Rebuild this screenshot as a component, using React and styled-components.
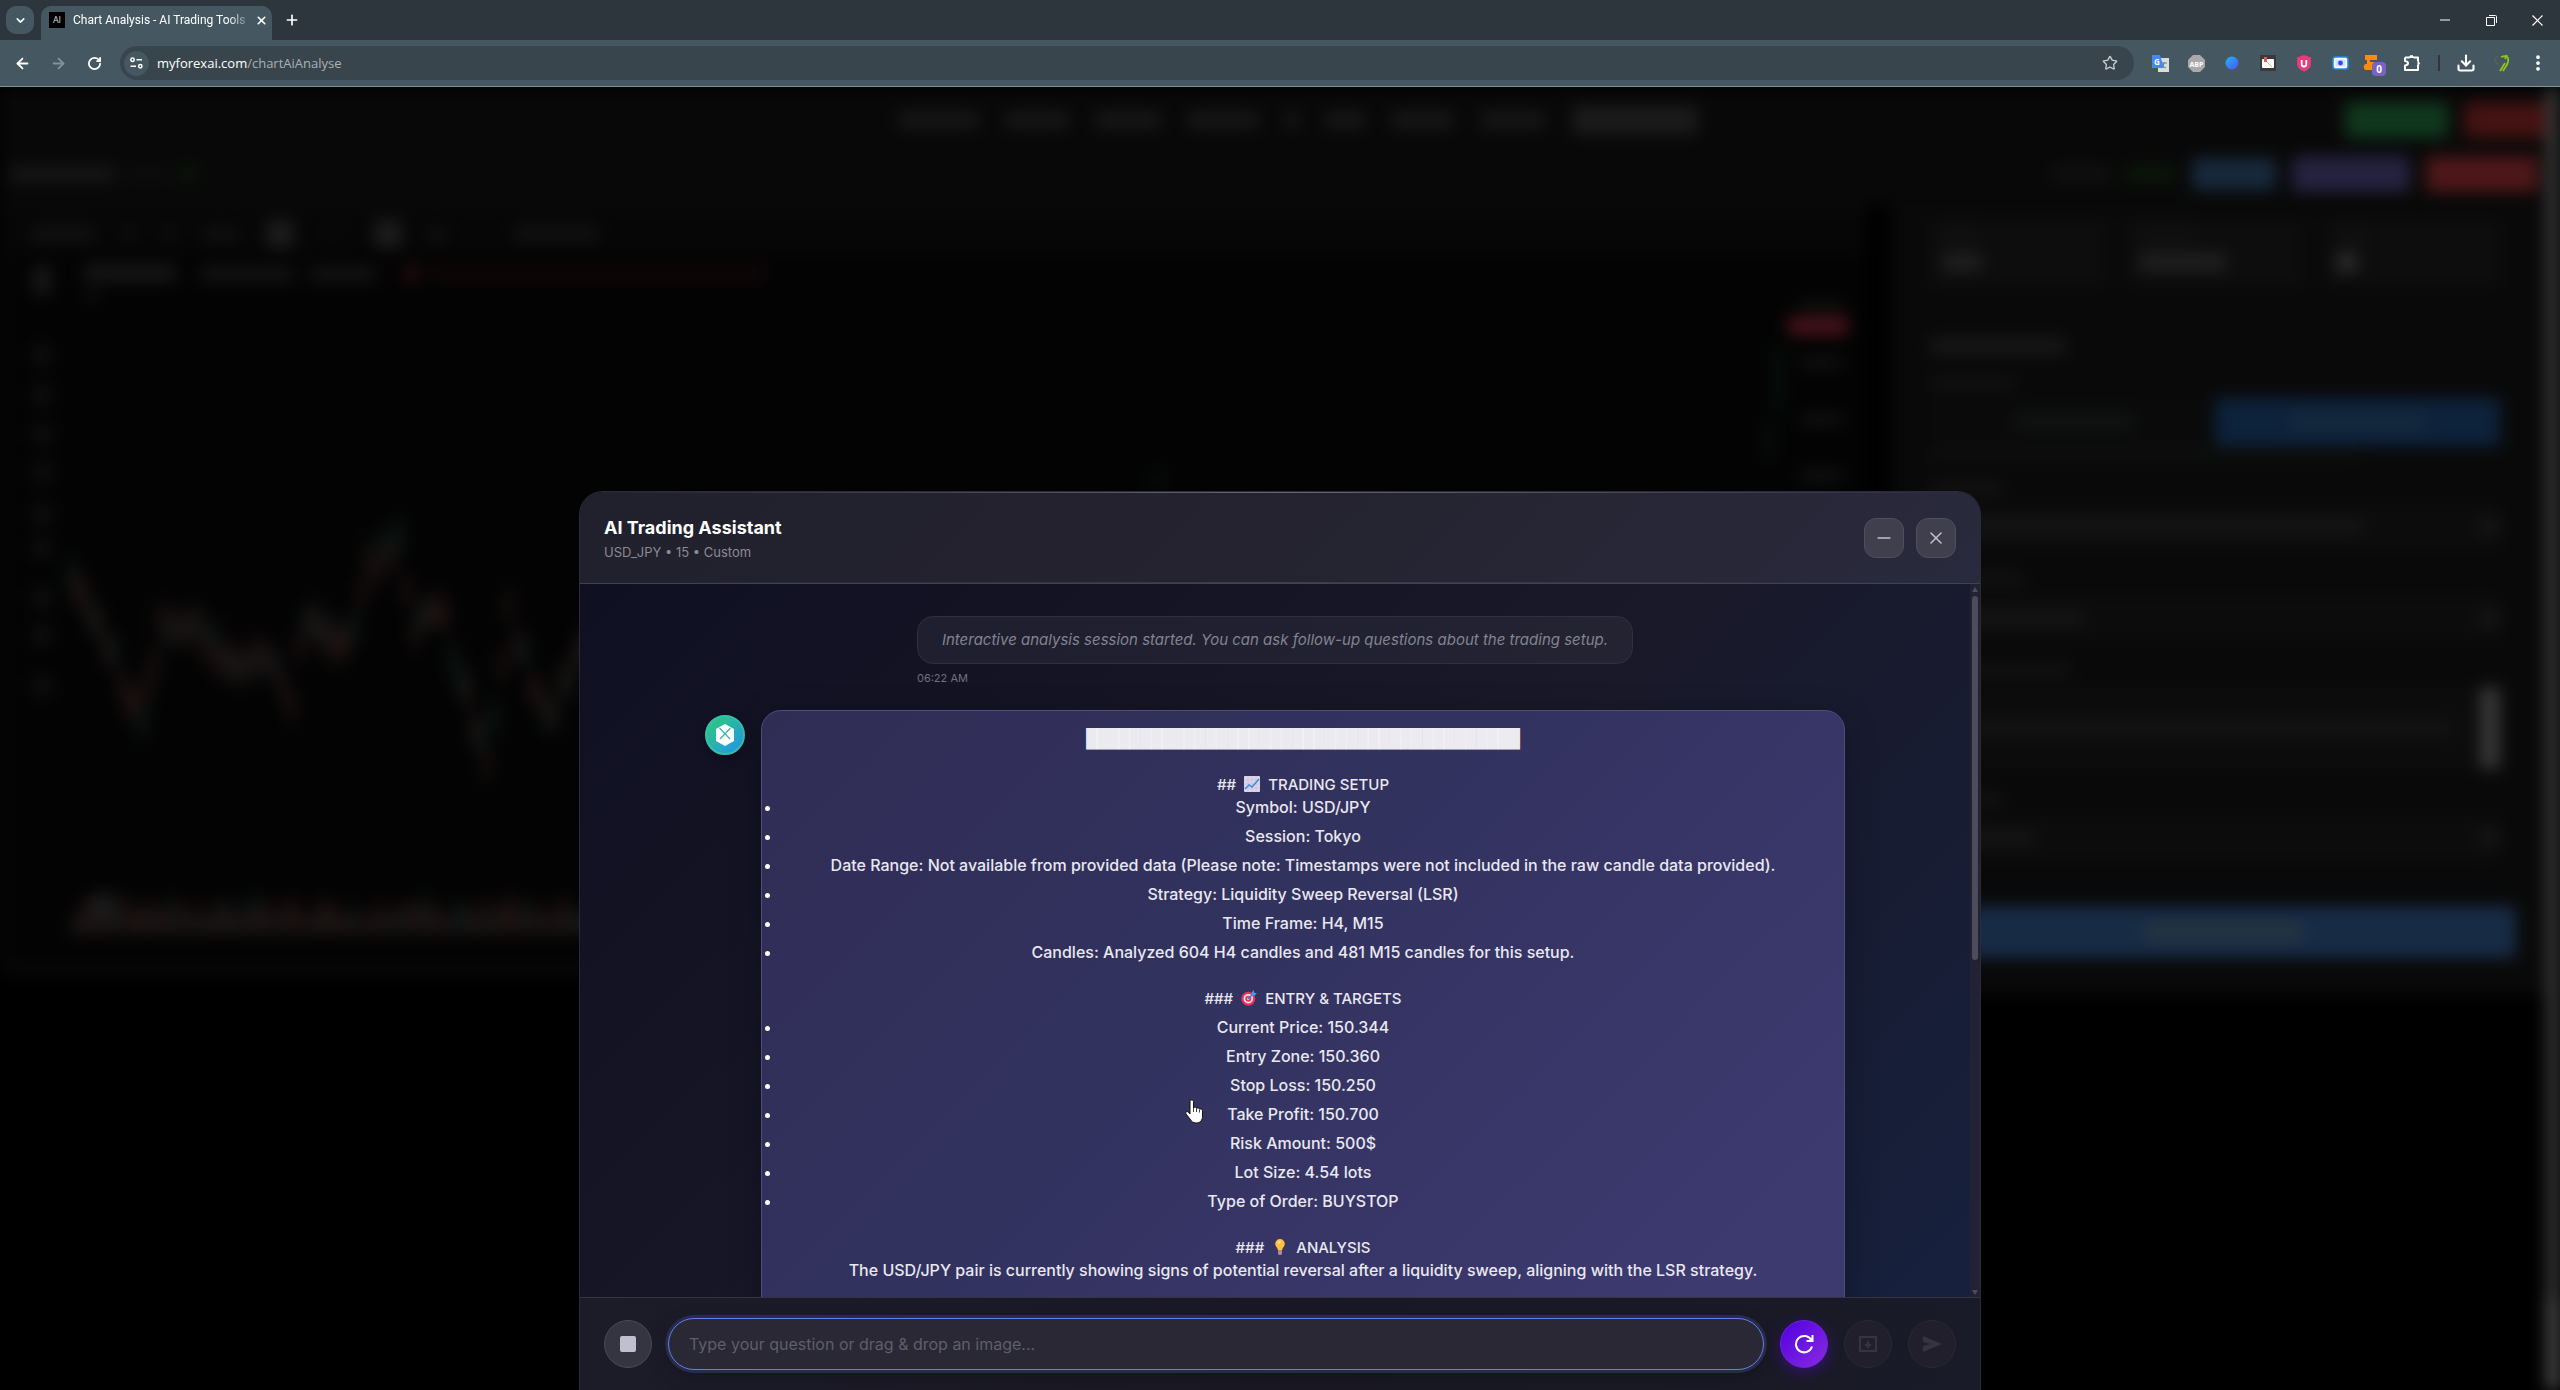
import React from "react";
import styled, { createGlobalStyle } from "styled-components";
import {
  ArrowLeft, ArrowRight, RotateCw, Star, ChevronDown, X, Plus, Minus, Puzzle, Download, EllipsisVertical,
} from "lucide-react";

const Global = createGlobalStyle`
  * { box-sizing: border-box; }
  html, body { margin: 0; background: #000; }
  body { font-family: Inter, "Open Sans", sans-serif; }
  button { font: inherit; padding: 0; border: 0; background: none; color: inherit; }
`;

const Window = styled.div`
  height: 100vh;
  display: flex;
  flex-direction: column;
  overflow: hidden;
  background: #000;
`;

/* ---------- browser chrome ---------- */

const TabStrip = styled.header`
  height: 40px;
  flex: none;
  display: flex;
  align-items: center;
  padding-left: 6px;
  background: #2c363c;
  color: #fff;
`;

const TabSearch = styled.button`
  width: 28px;
  height: 28px;
  border-radius: 10px;
  background: #455760;
  display: grid;
  place-items: center;
`;

const Tab = styled.div`
  align-self: flex-end;
  width: 231px;
  height: 34px;
  margin-left: 7px;
  padding: 0 8px 6px;
  border-radius: 10px 10px 0 0;
  background: #455760;
  display: flex;
  align-items: center;
  gap: 8px;
`;

const Favicon = styled.span`
  flex: none;
  width: 16px;
  height: 16px;
  background: #000;
  color: #ddd;
  font: 9px/16px "Open Sans", sans-serif;
  text-align: center;
`;

const TabTitle = styled.span`
  flex: 1;
  white-space: nowrap;
  font: 12px/20px Roboto, sans-serif;
  mask-image: linear-gradient(90deg, #000 90%, rgba(0, 0, 0, 0.3));
`;

const PlainButton = styled.button`
  flex: none;
  width: ${(p) => p.$w || 36}px;
  height: 28px;
  display: grid;
  place-items: center;
  color: ${(p) => p.$color || "#fff"};
`;

const WindowControls = styled.div`
  display: flex;
  margin-left: auto;
`;

const Toolbar = styled.div`
  height: 47px;
  flex: none;
  display: flex;
  align-items: center;
  padding: 0 4px;
  background: #455760;
  border-bottom: 1px solid #84939b;
`;

const UrlBar = styled.div`
  flex: 1;
  height: 34px;
  margin: 0 8px;
  padding: 0 8px 0 4px;
  border-radius: 17px;
  background: #39454c;
  display: flex;
  align-items: center;
  gap: 8px;
  color: #fff;
  font: 13px/20px "Open Sans", sans-serif;
`;

const SiteInfo = styled.button`
  width: 25px;
  height: 25px;
  border-radius: 50%;
  background: #455760;
  display: grid;
  place-items: center;
`;

const Url = styled.span`
  flex: 1;
  i { font-style: normal; color: #a9b1b5; }
`;

const Divider = styled.span`
  width: 2px;
  height: 16px;
  margin: 0 8px;
  background: #2c363c;
`;

/* ---------- dimmed page behind the dialog ---------- */

const Viewport = styled.div`
  flex: 1;
  min-height: 0;
  display: grid;
  overflow: hidden;
`;

const Page = styled.div`
  grid-area: 1 / 1;
  display: flex;
  filter: blur(8px);
  min-width: 0;
  min-height: 0;
`;

const PageColumn = styled.div`
  flex: 1;
  min-width: 0;
`;

const PageBody = styled.div`
  height: 888px;
  background: #080808;
`;

const PageScroll = styled.div`
  width: 14px;
  background: linear-gradient(#363636 93%, #484848 93%);
`;

const Nav = styled.div`
  height: 66px;
  display: grid;
  grid-template-columns: 1fr auto 1fr;
  align-items: center;
  padding-left: 50px;
`;

const Group = styled.div`
  display: flex;
  align-items: center;
  gap: ${(p) => p.$gap || 16}px;
  margin-left: ${(p) => (p.$end ? "auto" : "0")};
  justify-content: ${(p) => (p.$end ? "flex-end" : "flex-start")};
`;

const Ghost = styled.div`
  flex: none;
  width: ${(p) => p.$w}px;
  height: ${(p) => p.$h || 14}px;
  border-radius: 4px;
  background: ${(p) => p.$c || "#181818"};
`;

const SubNav = styled.div`
  height: 42px;
  display: flex;
  align-items: center;
  padding: 0 8px 0 10px;
`;

const Workspace = styled.div`
  display: flex;
  align-items: flex-start;
  padding: 10px 0 0 8px;
`;

const ChartPanel = styled.div`
  flex: 1;
  min-width: 0;
  margin-top: 10px;
  background: #030303;
`;

const ChartTools = styled.div`
  height: 38px;
  display: flex;
  align-items: center;
  gap: 26px;
  padding: 0 22px;
  background: #060606;
`;

const Gutter = styled.div`
  width: 26px;
  height: 770px;
  background: #000;
`;

const Side = styled.div`
  width: 654px;
  padding: 15px 46px 36px 38px;
  background: #090909;
`;

const Cards = styled.div`
  display: grid;
  grid-template-columns: repeat(3, 1fr);
  gap: 22px;
  margin-bottom: 52px;
`;

const GhostCard = styled.div`
  height: 66px;
  padding: 12px;
  background: #0d0d0d;
  display: grid;
  gap: 10px;
`;

const Toggle = styled.div`
  display: grid;
  grid-template-columns: 1fr 1fr;
  margin: 10px 0 4px;
`;

const ToggleHalf = styled.div`
  height: 48px;
  display: grid;
  place-items: center;
  background: ${(p) => (p.$on ? "#0d223b" : "#0a0a0a")};
`;

const Field = styled.div`
  display: grid;
  gap: 11px;
  margin-top: 24px;
`;

const GhostControl = styled.div`
  height: ${(p) => p.$h || 44}px;
  display: flex;
  align-items: center;
  justify-content: space-between;
  padding-left: 14px;
  background: #0c0c0c;
`;

const Submit = styled.div`
  height: 52px;
  margin: 46px -16px 0 0;
  display: grid;
  place-items: center;
  background: #172b45;
`;

/* ---------- dialog ---------- */

const Overlay = styled.div`
  grid-area: 1 / 1;
  min-height: 0;
  position: relative;
  display: flex;
  justify-content: center;
  align-items: flex-end;
`;

const Dialog = styled.section`
  width: min(1402px, 90vw);
  height: min(899px, 90vh);
  display: flex;
  flex-direction: column;
  overflow: hidden;
  border: 1px solid #2b2a38;
  border-bottom: 0;
  border-radius: 24px 24px 0 0;
  background: linear-gradient(135deg, #0e0f21 0%, #191828 50%, #16213f 100%);
  color: #fff;
`;

const DialogHeader = styled.div`
  flex: none;
  min-height: 92px;
  padding: 0 24px;
  display: flex;
  align-items: center;
  border-bottom: 1px solid #42414e;
  background:
    linear-gradient(90deg, transparent, rgba(255, 255, 255, 0.3), transparent) top / 100% 1px no-repeat,
    linear-gradient(90deg, transparent, rgba(255, 255, 255, 0.12), transparent) bottom / 100% 1px no-repeat,
    linear-gradient(135deg, #21202d, #24232f 50%, #2a2a3e);
`;

const Title = styled.h1`
  margin: 0;
  font-size: 18px;
  font-weight: 700;
  line-height: 28px;
`;

const Subtitle = styled.p`
  margin: 0;
  font-size: 13px;
  line-height: 20px;
  color: #8b8a94;
`;

const HeaderActions = styled.div`
  display: flex;
  gap: 12px;
  margin-left: auto;
`;

const SquareButton = styled.button`
  width: 40px;
  height: 40px;
  border: 1px solid #504f5d;
  border-radius: 12px;
  background: #403f4d;
  color: #c4c3d2;
  display: grid;
  place-items: center;
`;

const Body = styled.div`
  flex: 1;
  min-height: 0;
  display: flex;
`;

const Thread = styled.div`
  flex: 1;
  min-width: 0;
  overflow: hidden;
  padding: 32px 125px 0;
  display: flex;
  flex-direction: column;
  align-items: center;
  gap: 22px;
`;

const Notice = styled.div`
  p {
    margin: 0;
    height: 48px;
    padding: 0 24px;
    border: 1px solid #302f3d;
    border-radius: 16px;
    background: rgba(255, 255, 255, 0.05);
    font-size: 15px;
    line-height: 46px;
    font-style: italic;
    color: #82848f;
  }
  time {
    display: block;
    margin-top: 4px;
    font-size: 11px;
    line-height: 20px;
    color: #71717c;
  }
`;

const Message = styled.article`
  width: 100%;
  display: flex;
  align-items: flex-start;
  gap: 16px;
`;

const Avatar = styled.div`
  flex: none;
  width: 40px;
  height: 40px;
  margin-top: 5px;
  border: 2px solid #35bfae;
  border-radius: 50%;
  background: linear-gradient(135deg, #2ecc71, #2196f3);
  display: grid;
  place-items: center;
  box-shadow: 0 4px 12px rgba(0, 0, 0, 0.3);
`;

const Bubble = styled.div`
  flex: 1;
  min-height: 720px;
  padding: 16px 20px;
  border: 1px solid #4e4c80;
  border-radius: 20px;
  background: linear-gradient(135deg, #302d55 0%, #32325f 40%, #3d3a70 85%);
  box-shadow: 0 8px 32px rgba(0, 0, 0, 0.3);
  text-align: center;
  font-size: 16px;
  font-weight: 500;
  line-height: 23px;
  color: #e9e8f0;

  p, ul { margin: 0; padding: 0; }
  li + li { margin-top: 6px; }
  li::marker { color: #fff; }
`;

const Rule = styled.p`
  font: 18px/23px "DejaVu Sans Mono", monospace;
  color: rgba(255, 255, 255, 0.93);
`;

const Heading = styled.h2`
  margin: 23px 0 ${(p) => (p.$spaced ? 6 : 0)}px;
  font: inherit;
  font-size: 15px;
  svg { vertical-align: -2px; margin: 0 4px; }
`;

const Track = styled.div`
  flex: none;
  width: 10px;
  padding: 3px 0 2px;
  background: #222234;
  display: flex;
  flex-direction: column;
  align-items: center;
  justify-content: space-between;
`;

const ThumbGroup = styled.div`
  display: grid;
  justify-items: center;
  gap: 4px;
`;

const Thumb = styled.div`
  width: 6px;
  height: 364px;
  border-radius: 3px;
  background: #4c4c5d;
`;

const Composer = styled.form`
  flex: none;
  padding: 20px 24px;
  display: flex;
  align-items: center;
  gap: 16px;
  border-top: 1px solid #35343f;
  background: linear-gradient(90deg, #1c1b28, #191824 50%, #1a1b28);
`;

const Prompt = styled.input`
  flex: 1;
  min-width: 0;
  height: 52px;
  padding: 0 20px;
  border: 1px solid #667eea;
  border-radius: 26px;
  outline: 0;
  background: #292834;
  box-shadow: 0 0 0 3px #272b4c, 0 6px 20px rgba(0, 0, 0, 0.25);
  color: #fff;
  font: 16px Inter, sans-serif;
  &::placeholder { color: #5f5e6b; opacity: 1; }
`;

const RoundButton = styled.button`
  flex: none;
  width: 48px;
  height: 48px;
  border-radius: 50%;
  display: grid;
  place-items: center;
  border: 1px solid ${(p) => (p.$kind === "primary" ? "#6a24e0" : p.$kind === "stop" ? "#4a4955" : "#2a2935")};
  background: ${(p) =>
    p.$kind === "primary" ? "linear-gradient(135deg, #5000e0, #8a2be2)" : p.$kind === "stop" ? "#353441" : "#201f2b"};
  box-shadow: ${(p) => (p.$kind === "primary" ? "0 4px 14px rgba(98, 0, 234, 0.4)" : "none")};
  color: ${(p) => (p.$kind === "primary" ? "#fff" : p.$kind === "stop" ? "#c0bfd0" : "#35343f")};
`;

const Pointer = styled.svg`
  position: absolute;
  left: 1185px;
  top: 1012px;
`;

/* ---------- drawings ---------- */

const ChartEmoji = () => (
  <svg width="16" height="16" viewBox="0 0 16 16" aria-label="chart">
    <rect width="16" height="16" rx="1" fill="#ddd6ea" />
    <path d="M4 0v16M8 0v16M12 0v16M0 4h16M0 8h16M0 12h16" stroke="#c3b8d8" strokeWidth="0.6" />
    <path d="M1 13l4-4 3 2 7-8" fill="none" stroke="#3390e0" strokeWidth="1.5" />
  </svg>
);

const TargetEmoji = () => (
  <svg width="16" height="16" viewBox="0 0 16 16" aria-label="target">
    <circle cx="7.3" cy="8.7" r="7" fill="#e8315b" />
    <circle cx="7.3" cy="8.7" r="4.8" fill="#f1dfe9" />
    <circle cx="7.3" cy="8.7" r="3" fill="#e8315b" />
    <circle cx="7.3" cy="8.7" r="1.2" fill="#f1dfe9" />
    <path d="M7 9l5-5" stroke="#2b7fc4" strokeWidth="1.4" />
    <path d="M10.500 3l2-3 .8 2.700 2.700.8-3 2.200-2.300-.3z" fill="#3aa0ea" />
  </svg>
);

const BulbEmoji = () => (
  <svg width="16" height="16" viewBox="0 0 16 16" aria-label="bulb">
    <path d="M8 0a4.800 4.800 0 0 1 4.800 4.800c0 2.700-2.300 3.700-2.700 6.200H5.900C5.500 8.500 3.200 7.500 3.200 4.800A4.800 4.800 0 0 1 8 0z" fill="#ffc03d" />
    <path d="M6.500 2.200c1-1 2.500-.8 2.500.5S7 5 6 5s-.4-2 .5-2.800z" fill="#ffe59a" />
    <path d="M6 11h4v3.500L9 16H7l-1-1.500z" fill="#a88aa6" />
  </svg>
);

const CubeIcon = () => (
  <svg width="20" height="22" viewBox="0 0 20 22">
    <path d="M10 0l9 5v12l-9 5-9-5V5z" fill="#fff" />
    <path d="M4.500 4l10.500 11M15.500 4L5 15" stroke="#2bb5a5" strokeWidth="1.100" />
  </svg>
);

const candlePoints = [
  [70, 575], [105, 640], [128, 695], [142, 720], [160, 625], [198, 630], [230, 668], [266, 655], [290, 695],
  [306, 618], [345, 650], [368, 568], [398, 540], [414, 628], [436, 600], [460, 675], [486, 765], [508, 615],
  [546, 722], [575, 655], [640, 600], [760, 560],
];

const candles = candlePoints.slice(1).flatMap(([x, y], i) => {
  const [px, py] = candlePoints[i];
  const steps = Math.max(2, Math.round((x - px) / 7));
  return Array.from({ length: steps }, (_, k) => {
    const cy = py + ((y - py) * k) / steps;
    const n = i * 5 + k;
    return { x: px + ((x - px) * k) / steps, y: cy + Math.sin(k * 3 + i) * 10, up: (n * 7) % 3 === 0, n, vol: 14 + ((n * 37) % 26) };
  });
});

const ChartDrawing = () => (
  <svg width="1856" height="712" viewBox="8 253 1856 712" display="block" aria-hidden="true">
    {[140, 232, 324, 478, 570, 716, 806, 856, 954, 1050].map((x) => (
      <rect key={x} x={x} y="320" width="2" height="630" fill="#070707" />
    ))}
    {[355, 533, 811].map((y) => (
      <rect key={y} x="90" y={y} width="1690" height="2" fill="#070707" />
    ))}
    {[266, 345, 385, 424, 462, 504, 538, 588, 625, 676].map((y, i) => (
      <rect key={y} x="33" y={y} width="18" height={i ? 20 : 28} fill={i ? "#0f0f0f" : "#181818"} />
    ))}
    <rect x="84" y="264" width="92" height="18" fill="#161616" />
    <rect x="200" y="266" width="94" height="16" fill="#131313" />
    <rect x="310" y="266" width="66" height="16" fill="#131313" />
    <rect x="405" y="264" width="12" height="18" fill="#2a0c10" />
    <rect x="425" y="266" width="340" height="14" fill="#110608" />
    <rect x="86" y="290" width="12" height="12" fill="#111" />
    {candles.map((c) => (
      <g key={c.n + "-" + c.x}>
        <rect x={c.x} y={c.y - 22} width="3" height="44" fill="#141211" />
        <rect x={c.x - 2} y={c.y - 12} width="6" height="26" fill={c.up ? "#0f201d" : "#261515"} />
        <rect x={c.x} y={934 - c.vol} width="7" height={c.vol} fill={c.up ? "#0e1b19" : "#211212"} />
      </g>
    ))}
    <circle cx="103" cy="905" r="13" fill="#1b1b1b" />
    <rect x="1775" y="350" width="7" height="60" fill="#061811" />
    <rect x="1766" y="420" width="6" height="40" fill="#0a1311" />
    <rect x="1154" y="470" width="8" height="20" fill="#08100e" />
    <rect x="1800" y="302" width="44" height="8" fill="#141414" />
    <rect x="1788" y="317" width="60" height="18" fill="#49131a" />
    {[358, 415, 471].map((y) => (
      <rect key={y} x="1800" y={y} width="42" height="9" fill="#151515" />
    ))}
  </svg>
);

const extensions = [
  ["Translate", <svg width="17" height="17" viewBox="0 0 17 17"><rect x="6" y="3" width="11" height="14" fill="#d9dde0" /><path d="M9 8h6M12 7c0 3-1 5-3 6M10 9c1 2 2 3 4 4" stroke="#68787f" fill="none" /><path d="M0 0h8l4 13H0z" fill="#4687f0" /><text x="2" y="9.500" fontSize="8" fontWeight="700" fill="#fff" fontFamily="Open Sans">G</text></svg>],
  ["Ad blocker", <svg width="17" height="17" viewBox="0 0 17 17"><path d="M5 0h7l5 5v7l-5 5H5l-5-5V5z" fill="#a9a9a9" /><text x="8.500" y="11.500" textAnchor="middle" fontSize="7" fontWeight="700" fill="#fff" fontFamily="Open Sans">ABP</text></svg>],
  ["Globe", <svg width="14" height="14"><defs><linearGradient id="globe" x1="0" y1="0" x2="1" y2="1"><stop stopColor="#22b5f8" /><stop offset="1" stopColor="#4a55f5" /></linearGradient></defs><circle cx="7" cy="7" r="6.500" fill="url(#globe)" /></svg>],
  ["Notes", <svg width="16" height="16"><rect width="16" height="16" fill="#3a3a3e" /><rect x="2" y="4" width="12" height="9" rx="1" fill="#fff" /><path d="M7 7l5 5" stroke="#e8a49a" /><rect x="4" y="2" width="3" height="5" fill="#e06050" /></svg>],
  ["Shield", <svg width="14" height="17" viewBox="0 0 14 17"><path d="M7 0l7 2.500v6c0 4-3 6.500-7 8-4-1.500-7-4-7-8v-6z" fill="#e83a7d" /><path d="M4.700 5v4.200a2.300 2.300 0 0 0 4.600 0V5" stroke="#fff" strokeWidth="1.800" fill="none" /></svg>],
  ["Capture", <svg width="17" height="14"><rect x="1" y="1" width="15" height="12" rx="2.500" fill="#fff" stroke="#2487f5" strokeWidth="1.600" /><rect x="3.500" y="3.500" width="10" height="7" rx="1" fill="#cfe2ff" /><circle cx="8.500" cy="7" r="2.400" fill="#3b45d6" /></svg>],
  ["Counter", <svg width="28" height="26" viewBox="0 0 28 26"><path d="M3 5h12v5H8v2h3c5 0 5 8 0 8H4c-3 0-3-6 0-6h1V10H3z" fill="#ff8a0c" /><rect x="10" y="12" width="14" height="14" rx="4" fill="#7763c2" /><text x="17" y="22.500" textAnchor="middle" fontSize="10" fontWeight="700" fill="#fff" fontFamily="Open Sans">0</text></svg>],
  ["Extensions", (
    <svg width="18" height="18" viewBox="0 0 18 18" fill="none" stroke="#fff" strokeWidth="2">
      <path d="M2 3.500h4.500M10.500 3.500H15v4M15 11v5H2v-4.500c4-.5 4-4 0-4.500V3.500" strokeLinejoin="round" />
      <path d="M6.500 3.500a2 2 0 0 1 4 0zM15 7.500a1.800 1.800 0 0 1 0 3.500z" fill="#fff" strokeWidth="1" />
    </svg>
  )],
];

const setup = [
  "Symbol: USD/JPY",
  "Session: Tokyo",
  "Date Range: Not available from provided data (Please note: Timestamps were not included in the raw candle data provided).",
  "Strategy: Liquidity Sweep Reversal (LSR)",
  "Time Frame: H4, M15",
  "Candles: Analyzed 604 H4 candles and 481 M15 candles for this setup.",
];

const targets = [
  "Current Price: 150.344", "Entry Zone: 150.360", "Stop Loss: 150.250", "Take Profit: 150.700",
  "Risk Amount: 500$", "Lot Size: 4.54 lots", "Type of Order: BUYSTOP",
];

const List = ({ items }) => <ul>{items.map((t) => <li key={t}>{t}</li>)}</ul>;

const Browser = () => (
  <>
    <TabStrip>
      <TabSearch aria-label="Search tabs"><ChevronDown size={13} strokeWidth={3} /></TabSearch>
      <Tab>
        <Favicon>AI</Favicon>
        <TabTitle>Chart Analysis - AI Trading Tools</TabTitle>
        <PlainButton $w={16} aria-label="Close tab"><X size={13} strokeWidth={3} /></PlainButton>
      </Tab>
      <PlainButton $w={40} aria-label="New tab"><Plus size={16} strokeWidth={2.500} /></PlainButton>
      <WindowControls>
        <PlainButton $w={46} aria-label="Minimize"><svg width="10" height="2"><path d="M0 1h10" stroke="#fff" /></svg></PlainButton>
        <PlainButton $w={46} aria-label="Restore"><svg width="11" height="11"><path d="M.5 2.500h8v8h-8zM3 .5h6.500a1 1 0 0 1 1 1V8" fill="none" stroke="#fff" /></svg></PlainButton>
        <PlainButton $w={46} aria-label="Close window"><svg width="11" height="11"><path d="M.5.500l10 10M10.500.500l-10 10" stroke="#fff" strokeWidth="1.200" /></svg></PlainButton>
      </WindowControls>
    </TabStrip>
    <Toolbar>
      <PlainButton aria-label="Back"><ArrowLeft size={17} strokeWidth={2.500} /></PlainButton>
      <PlainButton $color="#84929a" aria-label="Forward"><ArrowRight size={17} strokeWidth={2.500} /></PlainButton>
      <PlainButton aria-label="Reload"><RotateCw size={15} strokeWidth={2.800} /></PlainButton>
      <UrlBar>
        <SiteInfo aria-label="Site information">
          <svg width="13" height="12" viewBox="0 0 13 12" fill="none" stroke="#fff" strokeWidth="1.500"><circle cx="2.500" cy="2.700" r="1.700" /><path d="M6.500 2.700H12M.5 9.300H6" /><circle cx="10.300" cy="9.300" r="1.700" /></svg>
        </SiteInfo>
        <Url>myforexai.com<i>/chartAiAnalyse</i></Url>
        <PlainButton $w={32} $color="#c6cccf" aria-label="Bookmark"><Star size={16} strokeWidth={2} /></PlainButton>
      </UrlBar>
      {extensions.map(([name, icon]) => <PlainButton key={name} aria-label={name}>{icon}</PlainButton>)}
      <Divider />
      <PlainButton aria-label="Downloads"><Download size={20} strokeWidth={2.500} /></PlainButton>
      <PlainButton aria-label="Profile">
        <svg width="18" height="18" viewBox="0 0 18 18" fill="none"><path d="M5 2C1 3 1 8 6 11" stroke="#5b5f50" strokeWidth="1.500" /><path d="M8 3c6-2 8 0 7 5-1 4-3 5-5 9M14 1l-2 4M12 9l-5 8" stroke="#8bc81d" strokeWidth="1.800" /></svg>
      </PlainButton>
      <PlainButton aria-label="Menu"><EllipsisVertical size={20} strokeWidth={2.500} /></PlainButton>
    </Toolbar>
  </>
);

const DimmedPage = () => (
  <Page aria-hidden="true">
    <PageColumn>
      <PageBody>
        <Nav>
          <span />
          <Group $gap={26}>
            {[81, 64, 66, 72, 14, 40, 63, 66].map((w, i) => <Ghost key={i} $w={w} $h={16} />)}
            <Ghost $w={126} $h={28} $c="#1b1b1b" />
          </Group>
          <Group $end>
            <Ghost $w={103} $h={36} $c="#10381e" />
            <Ghost $w={82} $h={36} $c="#441212" />
          </Group>
        </Nav>
        <SubNav>
          <Group $gap={10}>
            <Ghost $w={105} /><Ghost $w={46} $h={8} $c="#0f0f0f" /><Ghost $w={14} $h={12} $c="#0c1c0a" />
          </Group>
          <Group $end>
            <Ghost $w={58} $h={12} $c="#131313" />
            <Ghost $w={50} $h={14} $c="#0c1a0a" />
            <Ghost $w={84} $h={32} $c="#17293c" />
            <Ghost $w={118} $h={36} $c="#25223f" />
            <Ghost $w={112} $h={36} $c="#4e1719" />
          </Group>
        </SubNav>
        <Workspace>
          <ChartPanel>
            <ChartTools>
              <Ghost $w={66} $c="#121212" /><Ghost $w={14} $c="#101010" /><Ghost $w={14} $c="#101010" />
              <Ghost $w={38} $c="#101010" /><Ghost $w={28} $h={28} $c="#1c1c1c" /><Ghost $w={28} $c="#080808" />
              <Ghost $w={28} $h={28} $c="#1c1c1c" /><Ghost $w={18} $c="#111" /><Ghost $w={16} $c="#060606" /><Ghost $w={84} $c="#131313" />
            </ChartTools>
            <ChartDrawing />
          </ChartPanel>
          <Gutter />
          <Side>
            <Cards>
              <GhostCard><Ghost $w={36} $h={8} $c="#131313" /><Ghost $w={40} $h={18} $c="#202020" /></GhostCard>
              <GhostCard><Ghost $w={56} $h={8} $c="#131313" /><Ghost $w={88} $h={18} $c="#202020" /></GhostCard>
              <GhostCard><Ghost $w={30} $h={8} $c="#131313" /><Ghost $w={20} $h={20} $c="#2c2c2c" /></GhostCard>
            </Cards>
            <Ghost $w={136} $h={16} $c="#181818" />
            <Field><Ghost $w={86} $h={10} $c="#131313" /></Field>
            <Toggle>
              <ToggleHalf><Ghost $w={120} $c="#111514" /></ToggleHalf>
              <ToggleHalf $on><Ghost $w={136} $c="#172b3d" /></ToggleHalf>
            </Toggle>
            <Ghost $w={430} $h={8} $c="#0e110f" />
            <Field><Ghost $w={74} $h={12} $c="#131313" /><GhostControl><Ghost $w={420} $c="#161616" /><Ghost $w={20} $h={20} $c="#151515" /></GhostControl></Field>
            <Field><Ghost $w={94} $h={12} $c="#131313" /><GhostControl><Ghost $w={140} $c="#161616" /><Ghost $w={20} $h={20} $c="#151515" /></GhostControl></Field>
            <Field><Ghost $w={140} $h={12} $c="#131313" /><GhostControl $h={82}><Ghost $w={510} $c="#141414" /><Ghost $w={20} $h={82} $c="#363636" /></GhostControl></Field>
            <Field><Ghost $w={74} $h={12} $c="#131313" /><GhostControl><Ghost $w={90} $c="#161616" /><Ghost $w={20} $h={20} $c="#151515" /></GhostControl></Field>
            <Submit><Ghost $w={160} $h={18} $c="#253441" /></Submit>
          </Side>
        </Workspace>
      </PageBody>
    </PageColumn>
    <PageScroll />
  </Page>
);

export default function App() {
  return (
    <Window>
      <Global />
      <Browser />
      <Viewport>
        <DimmedPage />
        <Overlay>
          <Dialog role="dialog" aria-labelledby="dialog-title">
            <DialogHeader>
              <div>
                <Title id="dialog-title">AI Trading Assistant</Title>
                <Subtitle>USD_JPY • 15 • Custom</Subtitle>
              </div>
              <HeaderActions>
                <SquareButton aria-label="Minimize"><Minus size={20} strokeWidth={2} /></SquareButton>
                <SquareButton aria-label="Close"><X size={20} strokeWidth={1.800} /></SquareButton>
              </HeaderActions>
            </DialogHeader>
            <Body>
              <Thread>
                <Notice>
                  <p>Interactive analysis session started. You can ask follow-up questions about the trading setup.</p>
                  <time>06:22 AM</time>
                </Notice>
                <Message>
                  <Avatar><CubeIcon /></Avatar>
                  <Bubble>
                    <Rule>{"█".repeat(40)}</Rule>
                    <Heading>## <ChartEmoji /> TRADING SETUP</Heading>
                    <List items={setup} />
                    <Heading $spaced>### <TargetEmoji /> ENTRY &amp; TARGETS</Heading>
                    <List items={targets} />
                    <Heading>### <BulbEmoji /> ANALYSIS</Heading>
                    <p>The USD/JPY pair is currently showing signs of potential reversal after a liquidity sweep, aligning with the LSR strategy.</p>
                  </Bubble>
                </Message>
              </Thread>
              <Track>
                <ThumbGroup>
                  <svg width="6" height="5"><path d="M3 0l3 5H0z" fill="#4c4c5d" /></svg>
                  <Thumb />
                </ThumbGroup>
                <svg width="6" height="5"><path d="M0 0h6L3 5z" fill="#4c4c5d" /></svg>
              </Track>
            </Body>
            <Composer onSubmit={(e) => e.preventDefault()}>
              <RoundButton type="button" $kind="stop" aria-label="Stop">
                <svg width="16" height="16"><rect width="16" height="16" rx="2" fill="currentColor" /></svg>
              </RoundButton>
              <Prompt aria-label="Your question" placeholder="Type your question or drag & drop an image..." />
              <RoundButton type="button" $kind="primary" aria-label="Restart">
                <svg width="20" height="20" viewBox="0 0 20 20" fill="none" stroke="currentColor" strokeWidth="2">
                  <path d="M18 12.500A8.200 8.200 0 1 1 17.500 6.500M18.500 1v6h-6" />
                </svg>
              </RoundButton>
              <RoundButton type="button" disabled aria-label="Attach image">
                <svg width="18" height="16" viewBox="0 0 18 16" fill="none" stroke="currentColor" strokeWidth="2"><path d="M1 1h16v14H1zM9 5v6M6 8l3 3 3-3" /></svg>
              </RoundButton>
              <RoundButton disabled aria-label="Send">
                <svg width="19" height="16" viewBox="0 0 19 16"><path d="M0 0l19 8-19 8v-6l8-2-8-2z" fill="currentColor" /></svg>
              </RoundButton>
            </Composer>
          </Dialog>
          <Pointer width="19" height="25" viewBox="0 0 19 25" aria-hidden="true">
            <path d="M5 2.500C5 .5 8.500.5 8.500 2.500V9c.5-1.500 3-1 3 .5.700-1 2.800-.7 3 .8.800-.8 3-.3 3 1.500V17c0 4-2 7-6 7-3.500 0-5-1.500-6.500-4L1 15c-1-2 1-3.200 2.500-1.700L5 15z" fill="#fff" stroke="#111" />
            <path d="M8.500 9v4M11.500 10v3M14.500 11v2.500" stroke="#111" strokeWidth="0.800" />
          </Pointer>
        </Overlay>
      </Viewport>
    </Window>
  );
}
